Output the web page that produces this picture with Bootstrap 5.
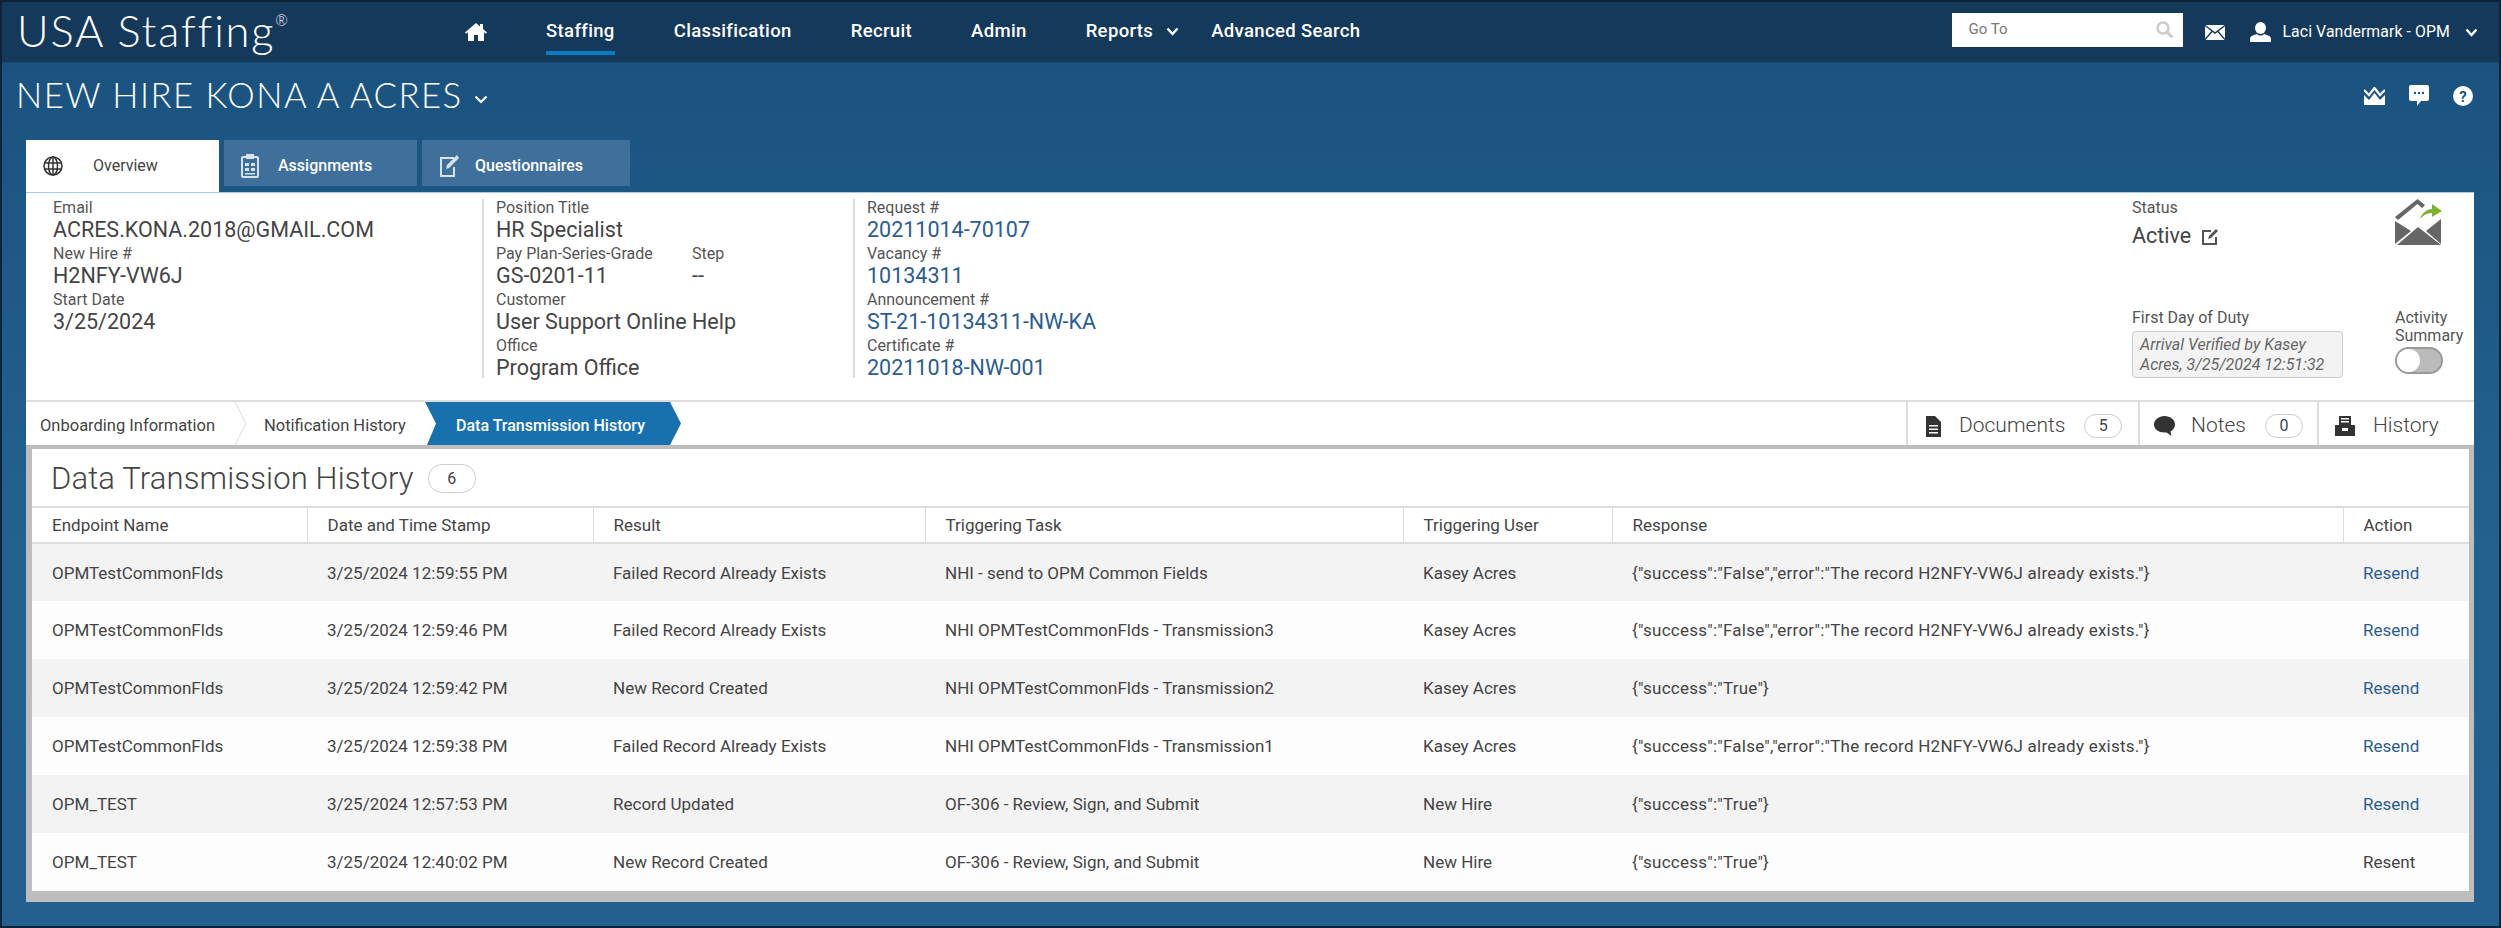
<!DOCTYPE html>
<html lang="en">
<head>
  <meta charset="UTF-8">
  <title>New Hire - Data Transmission History</title>
  <meta name="viewport" content="width=device-width, initial-scale=1">
  <link href="https://cdn.jsdelivr.net/npm/bootstrap@5.3.3/dist/css/bootstrap.min.css" rel="stylesheet">
  <style>
    html, body { height: 100%; }
    body {
      font-family: Roboto, "Liberation Sans", sans-serif;
      color: #444;
      background: linear-gradient(#1a517e, #23628f 60%, #235f8f);
      border: 2px solid #0c2338;
      overflow: hidden;
    }
    a { text-decoration: none; }

    /* top bar */
    .top-bar { height: 61px; background: #14395b; padding: 0 21px 0 15px; border-bottom: 1px solid #1a4a73; }
    .logo-text { font-family: Lato, sans-serif; font-weight: 300; font-size: 43.500px; letter-spacing: 1.800px; color: #fff; width: 448px; line-height: 1; padding-bottom: 2px; }
    .logo-text sup { font-size: 15px; top: -1.450em; letter-spacing: 0; }
    .main-links { gap: 59px; }
    .main-links a { color: #fff; font-size: 18.500px; font-weight: 500; display: block; letter-spacing: .35px; padding: 5px 0 6px; border-bottom: 4px solid transparent; margin-top: 4px; white-space: nowrap; }
    .main-links a.on { border-bottom-color: #0a7cc2; }
    .main-links .adv-link { margin-left: -27px; }
    .go-box { width: 231px; height: 34px; background: #fff; padding: 0 9px 0 16px; font-size: 15px; color: #777; margin-top: -5px; }
    .mail-ic { margin: 0 25px 0 22px; }
    .user-name { color: #fff; font-size: 15.800px; letter-spacing: .1px; margin: 0 15px 0 11px; }

    /* title row */
    .title-row { height: 77px; padding: 0 26px 12px 14px; }
    .page-title { font-family: Lato, sans-serif; font-weight: 300; font-size: 34.700px; letter-spacing: 1.500px; color: #fff; margin: 0; line-height: 1; }

    /* section tabs */
    .sect-tabs { padding-left: 24px; gap: 5px; height: 52px; }
    .sect-tab { height: 46px; background: #3f709c; color: #fff; font-size: 16px; font-weight: 500; padding: 5px 0 0 17px; gap: 19px; }
    .sect-tab.on { height: 52px; width: 193px; background: #fff; color: #444; font-weight: 400; padding: 0 0 0 17px; gap: 30px; }
    .tab-w1 { width: 193px; }
    .tab-w2 { width: 208px; gap: 15px; }

    /* white panel */
    .white-panel { margin: 0 25px 0 24px; background: #fff; border-top: 1px solid #a9c8e4; }
    .info-row { height: 209px; padding-top: 6px; border-bottom: 2px solid #ddd; }
    .info-col { height: 179px; flex-shrink: 0; }
    .info-col1 { width: 456px; padding-left: 27px; }
    .info-col2 { width: 371px; padding-left: 12px; border-left: 2px solid #ddd; }
    .info-col3 { padding-left: 12px; border-left: 2px solid #ddd; }
    .info-right { width: 342px; }
    .info-right1 { width: 263px; }
    .fld-label { font-size: 16px; line-height: 18px; color: #555; white-space: nowrap; }
    .fld-value { font-size: 21.500px; line-height: 26px; margin-bottom: 2px; color: #444; white-space: nowrap; }
    .fld-value a { color: #2a5c92; }
    .pay-col { width: 196px; }
    .status-val { margin-top: 6px; }
    .arrival-box { width: 211px; height: 47px; background: #f3f3f3; border: 1px solid #ccc; border-radius: 4px; font-size: 16px; font-style: italic; line-height: 20px; color: #666; padding: 3px 7px; white-space: nowrap; }
    .act-label { line-height: 18px; }
    .fake-toggle { width: 48px; height: 27px; background: #bbb; border-radius: 14px; border: 2px solid #999; margin: 2px 0 4px; padding: 0; }
    .fake-toggle span { width: 23px; height: 23px; background: #fff; border-radius: 50%; display: block; }

    /* breadcrumb strip */
    .crumb-strip { height: 43px; font-size: 16.500px; color: #444; }
    .crumb-item { padding: 5px 0 0 14px; width: 208px; white-space: nowrap; }
    .crumb-item2 { padding: 5px 0 0 17px; width: 178px; white-space: nowrap; }
    .crumb-on { width: 256px; height: 43px; background: #1771ae; color: #fff; font-size: 16px; font-weight: 500; padding: 5px 0 0 31px; clip-path: polygon(0 0, calc(100% - 11px) 0, 100% 50%, calc(100% - 11px) 100%, 2px 100%, 11px 50%); white-space: nowrap; }
    .side-link { border-left: 2px solid #ddd; font-size: 21px; font-weight: 300; color: #444; padding-top: 5px; }
    .side-doc { width: 232px; padding-left: 18px; }
    .side-note { width: 179px; padding-left: 14px; }
    .side-hist { width: 157px; padding-left: 16px; }
    .side-doc svg, .side-hist svg { margin-right: 18px; }
    .side-note svg { margin-right: 16px; }
    .count-pill { display: inline-block; width: 38px; height: 24px; border: 1px solid #ccc; border-radius: 12px; font-size: 16px; line-height: 22px; text-align: center; font-weight: 400; margin-left: 19px; }

    /* gray frame with table */
    .gray-frame { border: solid #bdbdbd; border-width: 4px 5px 11px 6px; }
    .hist-head { height: 57px; padding: 2px 0 0 19px; }
    .hist-head h2 { font-size: 31px; font-weight: 300; margin: 0; color: #444; letter-spacing: .15px; }
    .hist-head .count-pill { width: 48px; height: 29px; line-height: 27px; border-radius: 14px; margin-left: 14px; }
    .hist-table { table-layout: fixed; width: 100%; margin: 0; font-size: 17px; --bs-table-color: #444; --bs-table-striped-color: #444; --bs-table-striped-bg: #f3f3f3; --bs-table-bg: #fdfdfd; }
    .hist-table th, .hist-table td { padding: 2px 0 0 20px; vertical-align: middle; border: 0; white-space: nowrap; }
    .hist-table thead th { height: 36px; font-weight: 400; background: #fff; border-top: 2px solid #ddd; border-bottom: 2px solid #ddd; border-right: 1px solid #ddd; }
    .hist-table thead th:last-child { border-right: 0; }
    .hist-table tbody td { height: 58px; }
    .hist-table td a { color: #2a5c92; }
    .hist-table .resp-cell { letter-spacing: .24px; }
    .w-c1 { width: 275px; } .w-c2 { width: 286px; } .w-c3 { width: 332px; } .w-c4 { width: 478px; }
    .w-c5 { width: 209px; } .w-c6 { width: 731px; } .w-c7 { width: 126px; }
  </style>
</head>
<body>

  <!-- top bar -->
  <div class="top-bar d-flex align-items-center">
    <div class="logo-text">USA Staffing<sup>®</sup></div>
    <ul class="main-links nav flex-nowrap align-items-center">
      <li><a href="#" class="p-0 border-0 m-0"><svg width="22" height="18" viewBox="0 0 22 18" fill="#fff"><path d="M11 0 0 9.500l1.200 1.300L3 9.300V18h6v-6h4v6h6V9.300l1.800 1.500L22 9.500 18 6V1h-3v2.400z"/></svg></a></li>
      <li><a href="#" class="on">Staffing</a></li>
      <li><a href="#">Classification</a></li>
      <li><a href="#">Recruit</a></li>
      <li><a href="#">Admin</a></li>
      <li><a href="#">Reports <svg class="ms-2" width="13" height="9" viewBox="0 0 13 9"><path d="M1.500 1.500 6.500 7l5-5.500" fill="none" stroke="#fff" stroke-width="2.500"/></svg></a></li>
      <li class="adv-link"><a href="#">Advanced Search</a></li>
    </ul>
    <div class="ms-auto d-flex align-items-center">
      <div class="go-box d-flex align-items-center justify-content-between">
        <span>Go To</span>
        <svg width="18" height="18" viewBox="0 0 18 18"><circle cx="7" cy="7" r="5.500" fill="none" stroke="#ccc" stroke-width="2.500"/><path d="M11 11l5.500 5.500" stroke="#ccc" stroke-width="3"/></svg>
      </div>
      <svg class="mail-ic" width="20" height="15" viewBox="0 0 20 15"><rect width="20" height="15" fill="#fff"/><path d="M0 .5 10 8 20 .5M0 14.500 7 6.500M20 14.500 13 6.500" fill="none" stroke="#14395b" stroke-width="1.400"/></svg>
      <svg width="21" height="20" viewBox="0 0 21 20" fill="#fff"><ellipse cx="10.500" cy="6" rx="5.500" ry="6"/><path d="M0 20v-3c0-3 4-4 7-5 2 2 5 2 7 0 3 1 7 2 7 5v3z"/></svg>
      <span class="user-name">Laci Vandermark - OPM</span>
      <svg width="13" height="9" viewBox="0 0 13 9"><path d="M1.500 1.500 6.500 7l5-5.500" fill="none" stroke="#fff" stroke-width="2.500"/></svg>
    </div>
  </div>

  <!-- title -->
  <div class="title-row d-flex align-items-center justify-content-between">
    <h1 class="page-title">NEW HIRE KONA A ACRES <svg width="14" height="9" viewBox="0 0 14 9"><path d="M1.500 1.500 7 7l5.500-5.500" fill="none" stroke="#fff" stroke-width="2.200"/></svg></h1>
    <div class="d-flex align-items-center gap-4">
      <svg width="21" height="18" viewBox="0 0 21 18" fill="#fff"><path d="M0 3l5 5 5.500-7L16 8l5-5" fill="none" stroke="#fff" stroke-width="2.200"/><path d="M0 8l5 5 5.500-7L16 13l5-5v10H0z"/></svg>
      <svg width="20" height="21" viewBox="0 0 20 21" fill="#fff"><path d="M2 0h16a2 2 0 0 1 2 2v12a2 2 0 0 1-2 2h-6l-4 5v-5H2a2 2 0 0 1-2-2V2a2 2 0 0 1 2-2z"/><circle cx="6" cy="8" r="1.200" fill="#1a527f"/><circle cx="10" cy="8" r="1.200" fill="#1a527f"/><circle cx="14" cy="8" r="1.200" fill="#1a527f"/></svg>
      <svg width="20" height="20" viewBox="0 0 20 20"><circle cx="10" cy="10" r="10" fill="#fff"/><text x="10" y="15.500" text-anchor="middle" font-family="Roboto, sans-serif" font-size="15" font-weight="700" fill="#1a527f">?</text></svg>
    </div>
  </div>

  <!-- section tabs -->
  <div class="sect-tabs d-flex align-items-start">
    <a href="#" class="sect-tab on d-flex align-items-center">
      <svg width="20" height="20" viewBox="0 0 20 20" fill="none" stroke="#333" stroke-width="1.500"><circle cx="10" cy="10" r="9"/><ellipse cx="10" cy="10" rx="4.500" ry="9"/><path d="M1 7h18M1 13h18M10 1v18"/></svg>
      <span>Overview</span>
    </a>
    <a href="#" class="sect-tab tab-w1 d-flex align-items-center">
      <svg width="18" height="24" viewBox="0 0 18 24"><rect x="1" y="3" width="16" height="20" rx="1" fill="none" stroke="#d8e3ee" stroke-width="2"/><rect x="5" y="0" width="8" height="5" fill="#d8e3ee"/><path d="M4 9h4v3H4zM10 9h4v3h-4zM4 14h4v3H4zM10 14h4v3h-4zM4 19h10v1.500H4z" fill="#d8e3ee"/></svg>
      <span>Assignments</span>
    </a>
    <a href="#" class="sect-tab tab-w2 d-flex align-items-center">
      <svg width="21" height="24" viewBox="0 0 21 24" fill="none" stroke="#d8e3ee" stroke-width="2"><path d="M15 4H2v18h13V13"/><path d="M7 15l1-4L18 1l2 3-10 10z" fill="#d8e3ee" stroke="none"/></svg>
      <span>Questionnaires</span>
    </a>
  </div>

  <!-- content -->
  <div class="white-panel">
    <div class="info-row d-flex">
      <div class="info-col info-col1">
        <div class="fld-label">Email</div>
        <div class="fld-value">ACRES.KONA.2018@GMAIL.COM</div>
        <div class="fld-label">New Hire #</div>
        <div class="fld-value">H2NFY-VW6J</div>
        <div class="fld-label">Start Date</div>
        <div class="fld-value">3/25/2024</div>
      </div>
      <div class="info-col info-col2">
        <div class="fld-label">Position Title</div>
        <div class="fld-value">HR Specialist</div>
        <div class="d-flex">
          <div class="pay-col">
            <div class="fld-label">Pay Plan-Series-Grade</div>
            <div class="fld-value">GS-0201-11</div>
          </div>
          <div>
            <div class="fld-label">Step</div>
            <div class="fld-value">--</div>
          </div>
        </div>
        <div class="fld-label">Customer</div>
        <div class="fld-value">User Support Online Help</div>
        <div class="fld-label">Office</div>
        <div class="fld-value">Program Office</div>
      </div>
      <div class="info-col info-col3">
        <div class="fld-label">Request #</div>
        <div class="fld-value"><a href="#">20211014-70107</a></div>
        <div class="fld-label">Vacancy #</div>
        <div class="fld-value"><a href="#">10134311</a></div>
        <div class="fld-label">Announcement #</div>
        <div class="fld-value"><a href="#">ST-21-10134311-NW-KA</a></div>
        <div class="fld-label">Certificate #</div>
        <div class="fld-value"><a href="#">20211018-NW-001</a></div>
      </div>
      <div class="info-col info-right ms-auto d-flex">
        <div class="info-right1 d-flex flex-column">
          <div class="fld-label">Status</div>
          <div class="fld-value status-val">Active
            <svg class="ms-1" width="18" height="18" viewBox="0 0 18 18" fill="none" stroke="#555" stroke-width="2"><path d="M10 3H2v13h13V9"/><path d="M7 11l1-3 7-7 2 2-7 7z" fill="#555" stroke="none"/></svg>
          </div>
          <div class="mt-auto">
            <div class="fld-label mb-1">First Day of Duty</div>
            <div class="arrival-box">Arrival Verified by Kasey<br>Acres, 3/25/2024 12:51:32</div>
          </div>
        </div>
        <div class="d-flex flex-column">
          <svg width="47" height="47" viewBox="0 0 47 47" fill="#666"><path d="M22.500 0 0 18l3 3L22.500 5l4.500 4 3-3z"/><path d="M0 22l16 10L0 45zM46 20v25L31 32zM2 46l21-18 23 18z"/><path d="M25 20c2-6 7-10 12-10V5l10 7-10 6v-4c-5 0-8 2-12 6z" fill="#7bb32e"/></svg>
          <div class="mt-auto">
            <div class="fld-label act-label">Activity<br>Summary</div>
            <div class="fake-toggle"><span></span></div>
          </div>
        </div>
      </div>
    </div>

    <div class="crumb-strip d-flex align-items-center">
      <a href="#" class="crumb-item text-reset">Onboarding Information</a>
      <svg width="13" height="43" viewBox="0 0 13 43"><path d="M1 0l11 21.500L1 43" fill="none" stroke="#ddd"/></svg>
      <a href="#" class="crumb-item2 text-reset">Notification History</a>
      <a href="#" class="crumb-on d-flex align-items-center">Data Transmission History</a>
      <div class="ms-auto d-flex align-self-stretch">
        <a href="#" class="side-link side-doc d-flex align-items-center text-reset">
          <svg width="15" height="21" viewBox="0 0 15 21" fill="#333"><path d="M0 0h9l6 6v15H0z"/><path d="M3 9h9v1.500H3zM3 12.500h9V14H3zM3 16h9v1.500H3z" fill="#fff"/></svg>
          Documents <span class="count-pill">5</span>
        </a>
        <a href="#" class="side-link side-note d-flex align-items-center text-reset">
          <svg width="21" height="20" viewBox="0 0 21 20" fill="#333"><path d="M10.500 0C16 0 21 3.500 21 8.500c0 3-2 5.500-4.500 7l1 4.500-5-3.500h-2C4.500 16.500 0 13 0 8.500S5 0 10.500 0z"/></svg>
          Notes <span class="count-pill">0</span>
        </a>
        <a href="#" class="side-link side-hist d-flex align-items-center text-reset">
          <svg width="20" height="20" viewBox="0 0 20 20" fill="#333"><path d="M4 0h12v9H4z"/><path d="M6 2h8v1.500H6zM6 5h8v1.500H6z" fill="#fff"/><path d="M0 9h20v11H0z"/><path d="M7 12h6v3H7z" fill="#fff"/></svg>
          History
        </a>
      </div>
    </div>

    <div class="gray-frame">
      <div class="hist-head d-flex align-items-center">
        <h2>Data Transmission History</h2>
        <span class="count-pill">6</span>
      </div>
      <table class="table table-striped hist-table">
        <thead>
          <tr>
            <th class="w-c1">Endpoint Name</th>
            <th class="w-c2">Date and Time Stamp</th>
            <th class="w-c3">Result</th>
            <th class="w-c4">Triggering Task</th>
            <th class="w-c5">Triggering User</th>
            <th class="w-c6">Response</th>
            <th class="w-c7">Action</th>
          </tr>
        </thead>
        <tbody>
          <tr>
            <td>OPMTestCommonFlds</td><td>3/25/2024 12:59:55 PM</td><td>Failed Record Already Exists</td>
            <td>NHI - send to OPM Common Fields</td><td>Kasey Acres</td>
            <td class="resp-cell">{"success":"False","error":"The record H2NFY-VW6J already exists."}</td><td><a href="#">Resend</a></td>
          </tr>
          <tr>
            <td>OPMTestCommonFlds</td><td>3/25/2024 12:59:46 PM</td><td>Failed Record Already Exists</td>
            <td>NHI OPMTestCommonFlds - Transmission3</td><td>Kasey Acres</td>
            <td class="resp-cell">{"success":"False","error":"The record H2NFY-VW6J already exists."}</td><td><a href="#">Resend</a></td>
          </tr>
          <tr>
            <td>OPMTestCommonFlds</td><td>3/25/2024 12:59:42 PM</td><td>New Record Created</td>
            <td>NHI OPMTestCommonFlds - Transmission2</td><td>Kasey Acres</td>
            <td class="resp-cell">{"success":"True"}</td><td><a href="#">Resend</a></td>
          </tr>
          <tr>
            <td>OPMTestCommonFlds</td><td>3/25/2024 12:59:38 PM</td><td>Failed Record Already Exists</td>
            <td>NHI OPMTestCommonFlds - Transmission1</td><td>Kasey Acres</td>
            <td class="resp-cell">{"success":"False","error":"The record H2NFY-VW6J already exists."}</td><td><a href="#">Resend</a></td>
          </tr>
          <tr>
            <td>OPM_TEST</td><td>3/25/2024 12:57:53 PM</td><td>Record Updated</td>
            <td>OF-306 - Review, Sign, and Submit</td><td>New Hire</td>
            <td class="resp-cell">{"success":"True"}</td><td><a href="#">Resend</a></td>
          </tr>
          <tr>
            <td>OPM_TEST</td><td>3/25/2024 12:40:02 PM</td><td>New Record Created</td>
            <td>OF-306 - Review, Sign, and Submit</td><td>New Hire</td>
            <td class="resp-cell">{"success":"True"}</td><td>Resent</td>
          </tr>
        </tbody>
      </table>
    </div>
  </div>

  <script src="https://cdn.jsdelivr.net/npm/bootstrap@5.3.3/dist/js/bootstrap.bundle.min.js"></script>
</body>
</html>
